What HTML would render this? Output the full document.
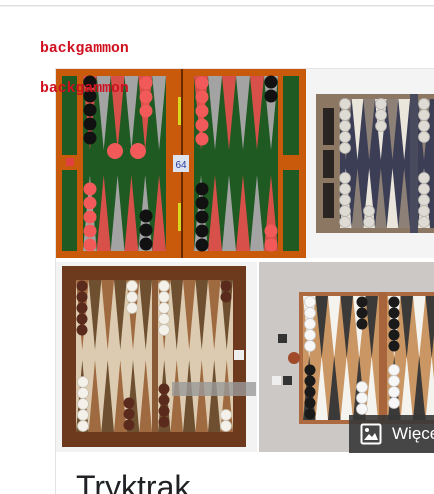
<!DOCTYPE html>
<html><head><meta charset="utf-8"><style>
html,body{margin:0;padding:0;background:#fff;width:434px;height:494px;overflow:hidden;position:relative;font-family:"Liberation Sans",sans-serif}
.bg{position:absolute;left:0;top:0}
.lbl{position:absolute;left:40px;font-family:"Liberation Mono",monospace;font-size:14.8px;font-weight:bold;color:#d0101e;line-height:1}
.more{position:absolute;left:349px;top:415px;width:85px;height:38px;background:rgba(55,55,55,.9);color:#fff;font-size:17px}
.more span{position:absolute;left:43px;top:9px}
.title{position:absolute;left:76px;top:471px;font-size:32px;color:#202124;line-height:1}
</style></head><body>
<svg class="bg" width="434" height="494" viewBox="0 0 434 494">
<rect x="0" y="5" width="434" height="1.5" fill="#e0e0e0"/>
<rect x="55" y="68" width="379" height="1" fill="#e6e6e6"/>
<rect x="55" y="68" width="1" height="426" fill="#e3e3e3"/>
<!-- board 1 -->
<rect x="56" y="69" width="250" height="189" fill="#c95a0c"/>
<rect x="62" y="76" width="15" height="79" fill="#1f5a22"/>
<rect x="62" y="170" width="15" height="81" fill="#1f5a22"/>
<rect x="66" y="158" width="8" height="8" fill="#e04040"/>
<rect x="83" y="76" width="83" height="175" fill="#1f5a22"/>
<rect x="194" y="76" width="84" height="175" fill="#1f5a22"/>
<rect x="181" y="69" width="2" height="189" fill="#6a2a00"/>
<rect x="283" y="76" width="16" height="79" fill="#1f5a22"/>
<rect x="283" y="170" width="16" height="81" fill="#1f5a22"/>
<rect x="178" y="97" width="3" height="28" fill="#d8d820"/>
<rect x="178" y="203" width="3" height="28" fill="#d8d820"/>
<rect x="173" y="155" width="16" height="17" fill="#dde4f0"/>
<text x="181" y="168" font-size="10" fill="#2a3a9a" text-anchor="middle" font-family="Liberation Sans">64</text>
<path fill="#d8504a" d="M83,76L96.8,76L89.9,150ZM110.7,76L124.5,76L117.6,150ZM138.3,76L152.2,76L145.2,150ZM194,76L208,76L201,150ZM222,76L236,76L229,150ZM250,76L264,76L257,150ZM96.8,251L110.7,251L103.7,175ZM124.5,251L138.3,251L131.4,175ZM152.2,251L166,251L159.1,175ZM208,251L222,251L215,175ZM236,251L250,251L243,175ZM264,251L278,251L271,175Z"/>
<path fill="#a3a3a3" d="M96.8,76L110.7,76L103.7,150ZM124.5,76L138.3,76L131.4,150ZM152.2,76L166,76L159.1,150ZM208,76L222,76L215,150ZM236,76L250,76L243,150ZM264,76L278,76L271,150ZM83,251L96.8,251L89.9,175ZM110.7,251L124.5,251L117.6,175ZM138.3,251L152.2,251L145.2,175ZM194,251L208,251L201,175ZM222,251L236,251L229,175ZM250,251L264,251L257,175Z"/>
<g fill="#111">
<circle cx="90" cy="82" r="6.5"/><circle cx="90" cy="96" r="6.5"/><circle cx="90" cy="110" r="6.5"/><circle cx="90" cy="124" r="6.5"/><circle cx="90" cy="138" r="6.5"/>
<circle cx="146" cy="216" r="6.5"/><circle cx="146" cy="230" r="6.5"/><circle cx="146" cy="244" r="6.5"/>
<circle cx="271" cy="82" r="6.5"/><circle cx="271" cy="96" r="6.5"/>
<circle cx="202" cy="189" r="6.5"/><circle cx="202" cy="203" r="6.5"/><circle cx="202" cy="217" r="6.5"/><circle cx="202" cy="231" r="6.5"/><circle cx="202" cy="245" r="6.5"/>
</g>
<g fill="#f25a5a">
<circle cx="146" cy="83" r="6.5"/><circle cx="146" cy="97" r="6.5"/><circle cx="146" cy="111" r="6.5"/>
<circle cx="115" cy="151" r="8"/><circle cx="138" cy="151" r="8"/>
<circle cx="90" cy="189" r="6.5"/><circle cx="90" cy="203" r="6.5"/><circle cx="90" cy="217" r="6.5"/><circle cx="90" cy="231" r="6.5"/><circle cx="90" cy="245" r="6.5"/>
<circle cx="202" cy="83" r="6.5"/><circle cx="202" cy="97" r="6.5"/><circle cx="202" cy="111" r="6.5"/><circle cx="202" cy="125" r="6.5"/><circle cx="202" cy="139" r="6.5"/>
<circle cx="271" cy="231" r="6.5"/><circle cx="271" cy="245" r="6.5"/>
</g>
<!-- board 2 -->
<rect x="306" y="69" width="128" height="189" fill="#f4f4f4"/>
<rect x="316" y="94" width="118" height="139" fill="#8c7763"/>
<rect x="323" y="108" width="11" height="37" fill="#2a2422"/>
<rect x="323" y="150" width="11" height="28" fill="#2a2422"/>
<rect x="323" y="183" width="11" height="35" fill="#2a2422"/>
<rect x="340" y="99" width="94" height="129" fill="#3c3e56"/>
<rect x="410" y="94" width="8" height="139" fill="#4a4a5e"/>
<path fill="#ebe6dc" d="M351.7,99L363.3,99L357.5,160ZM375,99L386.7,99L380.8,160ZM398.3,99L410,99L404.2,160ZM340,228L351.7,228L345.8,168ZM363.3,228L375,228L369.2,168ZM386.7,228L398.3,228L392.5,168ZM418,228L430,228L424,168Z"/>
<path fill="#8d8077" d="M340,99L351.7,99L345.8,160ZM363.3,99L375,99L369.2,160ZM386.7,99L398.3,99L392.5,160ZM351.7,228L363.3,228L357.5,168ZM375,228L386.7,228L380.8,168ZM398.3,228L410,228L404.2,168ZM418,99L430,99L424,160Z"/>
<g fill="#dedbd4" stroke="#b8b4ac" stroke-width=".8">
<circle cx="345" cy="104" r="5.5"/><circle cx="345" cy="115" r="5.5"/><circle cx="345" cy="126" r="5.5"/><circle cx="345" cy="137" r="5.5"/><circle cx="345" cy="148" r="5.5"/>
<circle cx="381" cy="104" r="5.5"/><circle cx="381" cy="115" r="5.5"/><circle cx="381" cy="126" r="5.5"/>
<circle cx="345" cy="178" r="5.5"/><circle cx="345" cy="189" r="5.5"/><circle cx="345" cy="200" r="5.5"/><circle cx="345" cy="211" r="5.5"/><circle cx="345" cy="222" r="5.5"/>
<circle cx="369" cy="211" r="5.5"/><circle cx="369" cy="222" r="5.5"/>
<circle cx="424" cy="104" r="5.5"/><circle cx="424" cy="115" r="5.5"/><circle cx="424" cy="126" r="5.5"/><circle cx="424" cy="137" r="5.5"/>
<circle cx="424" cy="178" r="5.5"/><circle cx="424" cy="189" r="5.5"/><circle cx="424" cy="200" r="5.5"/><circle cx="424" cy="211" r="5.5"/><circle cx="424" cy="222" r="5.5"/>
</g>
<!-- board 3 -->
<rect x="56" y="262" width="201" height="190" fill="#f3f3f3"/>
<rect x="62" y="266" width="184" height="181" fill="#6e3a1e"/>
<rect x="76" y="280" width="157" height="152" fill="#dccbb0"/>
<rect x="152" y="280" width="6" height="152" fill="#8a5a36"/>
<path fill="#a06a40" d="M76,280L88.7,280L82.3,350ZM101.3,280L114,280L107.7,350ZM126.7,280L139.3,280L133,350ZM158,280L170.5,280L164.2,350ZM183,280L195.5,280L189.2,350ZM208,280L220.5,280L214.2,350ZM88.7,432L101.3,432L95,360ZM114,432L126.7,432L120.3,360ZM139.3,432L152,432L145.7,360ZM170.5,432L183,432L176.7,360ZM195.5,432L208,432L201.7,360ZM220.5,432L233,432L226.7,360Z"/>
<path fill="#6e5030" d="M88.7,280L101.3,280L95,350ZM114,280L126.7,280L120.3,350ZM139.3,280L152,280L145.7,350ZM170.5,280L183,280L176.7,350ZM195.5,280L208,280L201.7,350ZM220.5,280L233,280L226.7,350ZM76,432L88.7,432L82.3,360ZM101.3,432L114,432L107.7,360ZM126.7,432L139.3,432L133,360ZM158,432L170.5,432L164.2,360ZM183,432L195.5,432L189.2,360ZM208,432L220.5,432L214.2,360Z"/>
<g fill="#5a2a1c">
<circle cx="82" cy="286" r="5.5"/><circle cx="82" cy="297" r="5.5"/><circle cx="82" cy="308" r="5.5"/><circle cx="82" cy="319" r="5.5"/><circle cx="82" cy="330" r="5.5"/>
<circle cx="226" cy="286" r="5.5"/><circle cx="226" cy="297" r="5.5"/>
<circle cx="129" cy="414" r="5.5"/><circle cx="129" cy="425" r="5.5"/><circle cx="129" cy="403" r="5.5"/>
<circle cx="164" cy="389" r="5.5"/><circle cx="164" cy="400" r="5.5"/><circle cx="164" cy="411" r="5.5"/><circle cx="164" cy="422" r="5.5"/>
</g>
<g fill="#f4f1ea" stroke="#c8c0b0" stroke-width=".8">
<circle cx="132" cy="286" r="5.5"/><circle cx="132" cy="297" r="5.5"/><circle cx="132" cy="308" r="5.5"/>
<circle cx="164" cy="286" r="5.5"/><circle cx="164" cy="297" r="5.5"/><circle cx="164" cy="308" r="5.5"/><circle cx="164" cy="319" r="5.5"/><circle cx="164" cy="330" r="5.5"/>
<circle cx="83" cy="382" r="5.5"/><circle cx="83" cy="393" r="5.5"/><circle cx="83" cy="404" r="5.5"/><circle cx="83" cy="415" r="5.5"/><circle cx="83" cy="426" r="5.5"/>
<circle cx="226" cy="415" r="5.5"/><circle cx="226" cy="426" r="5.5"/>
</g>
<rect x="172" y="382" width="84" height="14" fill="#9a9a9a" opacity=".8"/>
<rect x="234" y="350" width="10" height="10" fill="#eee"/>
<!-- board 4 -->
<rect x="259" y="262" width="175" height="190" fill="#cbc8c6"/>
<rect x="299" y="292" width="135" height="132" fill="#ad6a40"/>
<rect x="303" y="296" width="131" height="124" fill="#c99664"/>
<rect x="379" y="292" width="8" height="132" fill="#a8643a"/>
<path fill="#f5f3ee" d="M303,296L315.5,296L309.2,358ZM328,296L340.5,296L334.2,358ZM353,296L365.5,296L359.2,358ZM388,296L400.5,296L394.2,358ZM413,296L425.5,296L419.2,358ZM315.5,420L328,420L321.7,356ZM340.5,420L353,420L346.7,356ZM365.5,420L378,420L371.7,356ZM400.5,420L413,420L406.7,356ZM425.5,420L438,420L431.7,356Z"/>
<path fill="#3c3a38" d="M315.5,296L328,296L321.7,358ZM340.5,296L353,296L346.7,358ZM365.5,296L378,296L371.7,358ZM400.5,296L413,296L406.7,358ZM425.5,296L438,296L431.7,358ZM303,420L315.5,420L309.2,356ZM328,420L340.5,420L334.2,356ZM353,420L365.5,420L359.2,356ZM388,420L400.5,420L394.2,356ZM413,420L425.5,420L419.2,356Z"/>
<g fill="#f7f7f7" stroke="#ccc" stroke-width=".8">
<circle cx="310" cy="302" r="5.5"/><circle cx="310" cy="313" r="5.5"/><circle cx="310" cy="324" r="5.5"/><circle cx="310" cy="335" r="5.5"/><circle cx="310" cy="346" r="5.5"/>
<circle cx="362" cy="387" r="5.5"/><circle cx="362" cy="398" r="5.5"/><circle cx="362" cy="409" r="5.5"/>
<circle cx="394" cy="370" r="5.5"/><circle cx="394" cy="381" r="5.5"/><circle cx="394" cy="392" r="5.5"/><circle cx="394" cy="403" r="5.5"/>
</g>
<g fill="#1a1a1a">
<circle cx="362" cy="302" r="5.5"/><circle cx="362" cy="313" r="5.5"/><circle cx="362" cy="324" r="5.5"/>
<circle cx="394" cy="302" r="5.5"/><circle cx="394" cy="313" r="5.5"/><circle cx="394" cy="324" r="5.5"/><circle cx="394" cy="335" r="5.5"/><circle cx="394" cy="346" r="5.5"/>
<circle cx="310" cy="370" r="5.5"/><circle cx="310" cy="381" r="5.5"/><circle cx="310" cy="392" r="5.5"/><circle cx="310" cy="403" r="5.5"/><circle cx="310" cy="414" r="5.5"/>
</g>
<circle cx="294" cy="358" r="6" fill="#a04a2a"/>
<rect x="278" y="334" width="9" height="9" fill="#333"/>
<rect x="272" y="376" width="9" height="9" fill="#eee"/><rect x="283" y="376" width="9" height="9" fill="#333"/>
</svg>
<div class="lbl" style="top:42px">backgammon</div>
<div class="lbl" style="top:82px">backgammon</div>
<div class="more"><svg style="position:absolute;left:11px;top:8px" width="22" height="22" viewBox="0 0 22 22"><rect x="1.5" y="1.5" width="19" height="19" rx="1.5" fill="none" stroke="#fff" stroke-width="2"/><circle cx="7" cy="7" r="2" fill="#fff"/><path d="M4 17L9 11L12 14L15 10L18 17Z" fill="#fff"/></svg><span>Więcej</span></div>
<div class="title">Tryktrak</div>
</body></html>
